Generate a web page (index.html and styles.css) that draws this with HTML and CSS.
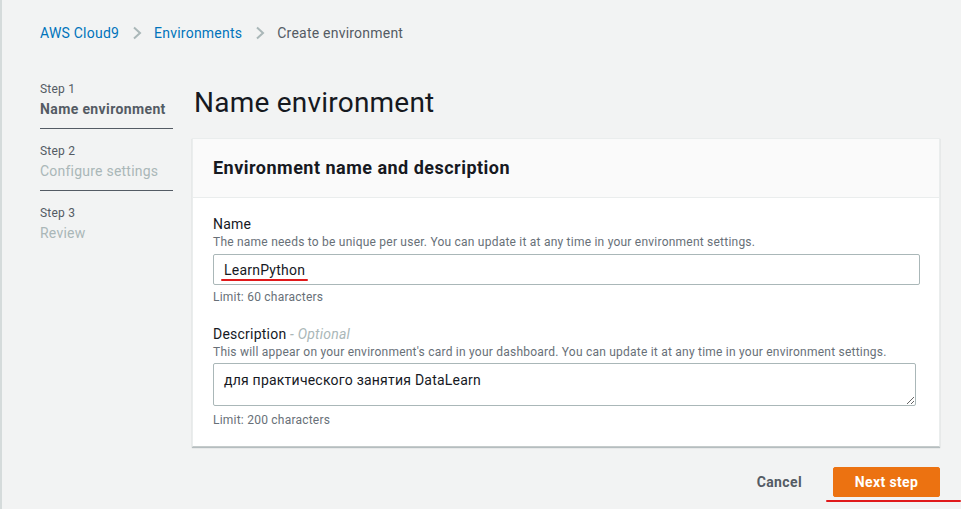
FILE: index.html
```html
<!DOCTYPE html>
<html lang="en">
<head>
<meta charset="utf-8">
<title>Create environment</title>
<link rel="stylesheet" href="styles.css">
</head>
<body>
<div class="page">
  <nav class="breadcrumbs">
    <a class="crumb link" href="#">AWS Cloud9</a>
    <svg class="chev" width="10" height="14" viewBox="0 0 10 14"><path d="M2 1.5 L8 7 L2 12.5" fill="none" stroke="#aab7b8" stroke-width="2"/></svg>
    <a class="crumb link" href="#">Environments</a>
    <svg class="chev" width="10" height="14" viewBox="0 0 10 14"><path d="M2 1.5 L8 7 L2 12.5" fill="none" stroke="#aab7b8" stroke-width="2"/></svg>
    <span class="crumb current">Create environment</span>
  </nav>

  <div class="layout">
    <ul class="steps">
      <li class="step active">
        <div class="step-num">Step 1</div>
        <div class="step-title">Name environment</div>
      </li>
      <li class="step">
        <div class="step-num">Step 2</div>
        <div class="step-title">Configure settings</div>
      </li>
      <li class="step last">
        <div class="step-num">Step 3</div>
        <div class="step-title">Review</div>
      </li>
    </ul>

    <main class="content">
      <h1 class="title">Name environment</h1>
      <section class="card">
        <header class="card-head">
          <h2>Environment name and description</h2>
        </header>
        <div class="card-body">
          <div class="field">
            <label class="label">Name</label>
            <div class="hint">The name needs to be unique per user. You can update it at any time in your environment settings.</div>
            <div class="input-wrap">
              <input class="input" type="text" value="LearnPython">
              <span class="mark mark-name"></span>
            </div>
            <div class="limit">Limit: 60 characters</div>
          </div>
          <div class="field second">
            <label class="label">Description <i class="optional">- Optional</i></label>
            <div class="hint">This will appear on your environment's card in your dashboard. You can update it at any time in your environment settings.</div>
            <textarea class="textarea">для практического занятия DataLearn</textarea>
            <div class="limit limit-desc">Limit: 200 characters</div>
          </div>
        </div>
      </section>
      <div class="actions">
        <button class="btn btn-link">Cancel</button>
        <button class="btn btn-primary">Next step</button>
        <span class="mark mark-next"></span>
      </div>
    </main>
  </div>
</div>
</body>
</html>
```

FILE: styles.css
```css
* { box-sizing: border-box; }
html, body { margin: 0; padding: 0; }
body {
  background: #f2f3f3;
  font-family: Roboto, "Open Sans", "Liberation Sans", sans-serif;
  color: #16191f;
  font-size: 14px;
  letter-spacing: 0.016em;
  height: 509px;
  overflow: hidden;
}
.page {
  border-left: 2px solid #d5dbdb;
  min-height: 509px;
  padding: 23px 0 0 38px;
}
.breadcrumbs {
  display: flex;
  align-items: center;
  height: 20px;
  font-size: 14px;
  line-height: 20px;
}
.crumb { text-decoration: none; }
.link { color: #0073bb; }
.current { color: #545b64; }
.chev { margin: 0 12px 0 13px; }

.layout {
  display: flex;
  margin-top: 19px;
  gap: 19px;
}
.steps {
  list-style: none;
  margin: 19px 0 0;
  padding: 0;
  width: 133px;
  flex: none;
}
.step {
  padding-bottom: 9px;
  border-bottom: 1px solid #545b64;
  margin-bottom: 14px;
}
.step.last { border-bottom: none; }
.step-num {
  font-size: 12px;
  line-height: 16px;
  color: #545b64;
}
.step-title {
  margin-top: 2px;
  font-size: 14px;
  line-height: 20px;
  color: #aab7b8;
  white-space: nowrap;
}
.step.active .step-title { color: #545b64; font-weight: 700; letter-spacing: 0.027em; }

.content {
  width: 748px;
  flex: none;
  position: relative;
}
.title {
  margin: 23px 0 17px 2px;
  font-size: 28px;
  line-height: 36px;
  font-weight: 400;
  color: #16191f;
}
.card {
  background: #fff;
  border: 1px solid #eaeded;
  border-bottom-color: #c5cbcb;
  box-shadow: 0 1px 1px rgba(0,28,36,.25);
}
.card-head {
  background: #fafafa;
  border-bottom: 1px solid #eaeded;
  height: 59px;
  padding: 0 20px;
  display: flex;
  align-items: center;
}
.card-head h2 {
  margin: 0;
  font-size: 18px;
  line-height: 22px;
  font-weight: 700;
  letter-spacing: 0.027em;
  color: #16191f;
}
.card-body { padding: 16px 20px 18px; }
.field.second { margin-top: 19px; }
.label {
  display: block;
  font-size: 14px;
  line-height: 20px;
  color: #16191f;
}
.optional { color: #aab7b8; font-style: italic; }
.hint, .limit {
  font-size: 12px;
  line-height: 16px;
  color: #687078;
}
.input-wrap { position: relative; margin-top: 4px; }
.input {
  display: block;
  width: 707px;
  height: 31px;
  border: 1px solid #aab7b8;
  border-radius: 2px;
  padding: 0 10px;
  font: inherit;
  font-size: 14px;
  letter-spacing: inherit;
  color: #16191f;
  background: #fff;
}
.limit { margin-top: 4px; }
.limit-desc { margin-top: 6px; }
.textarea {
  display: block;
  margin-top: 3px;
  width: 703px;
  height: 43px;
  border: 1px solid #aab7b8;
  border-radius: 2px;
  padding: 6px 10px;
  font: inherit;
  font-size: 14px;
  line-height: 20px;
  letter-spacing: inherit;
  color: #16191f;
  resize: vertical;
}
.actions {
  display: flex;
  justify-content: flex-end;
  align-items: center;
  margin-top: 20px;
  gap: 11px;
  position: relative;
}
.btn {
  font: inherit;
  font-size: 14px;
  font-weight: 700;
  letter-spacing: 0.027em;
  height: 30px;
  border-radius: 2px;
  border: none;
  cursor: pointer;
}
.btn-link { background: none; color: #545b64; padding: 0 20px; }
.btn-primary {
  background: #ec7211;
  color: #fff;
  width: 107px;
  padding: 0;
  border: 1px solid #ec7211;
}
.mark {
  position: absolute;
  height: 2px;
  background: #e0191b;
  border-radius: 1px;
}
.mark-name { left: 8px; width: 87px; top: 25px; }
.mark-next { right: -21px; width: 135px; bottom: -5px; }
```
